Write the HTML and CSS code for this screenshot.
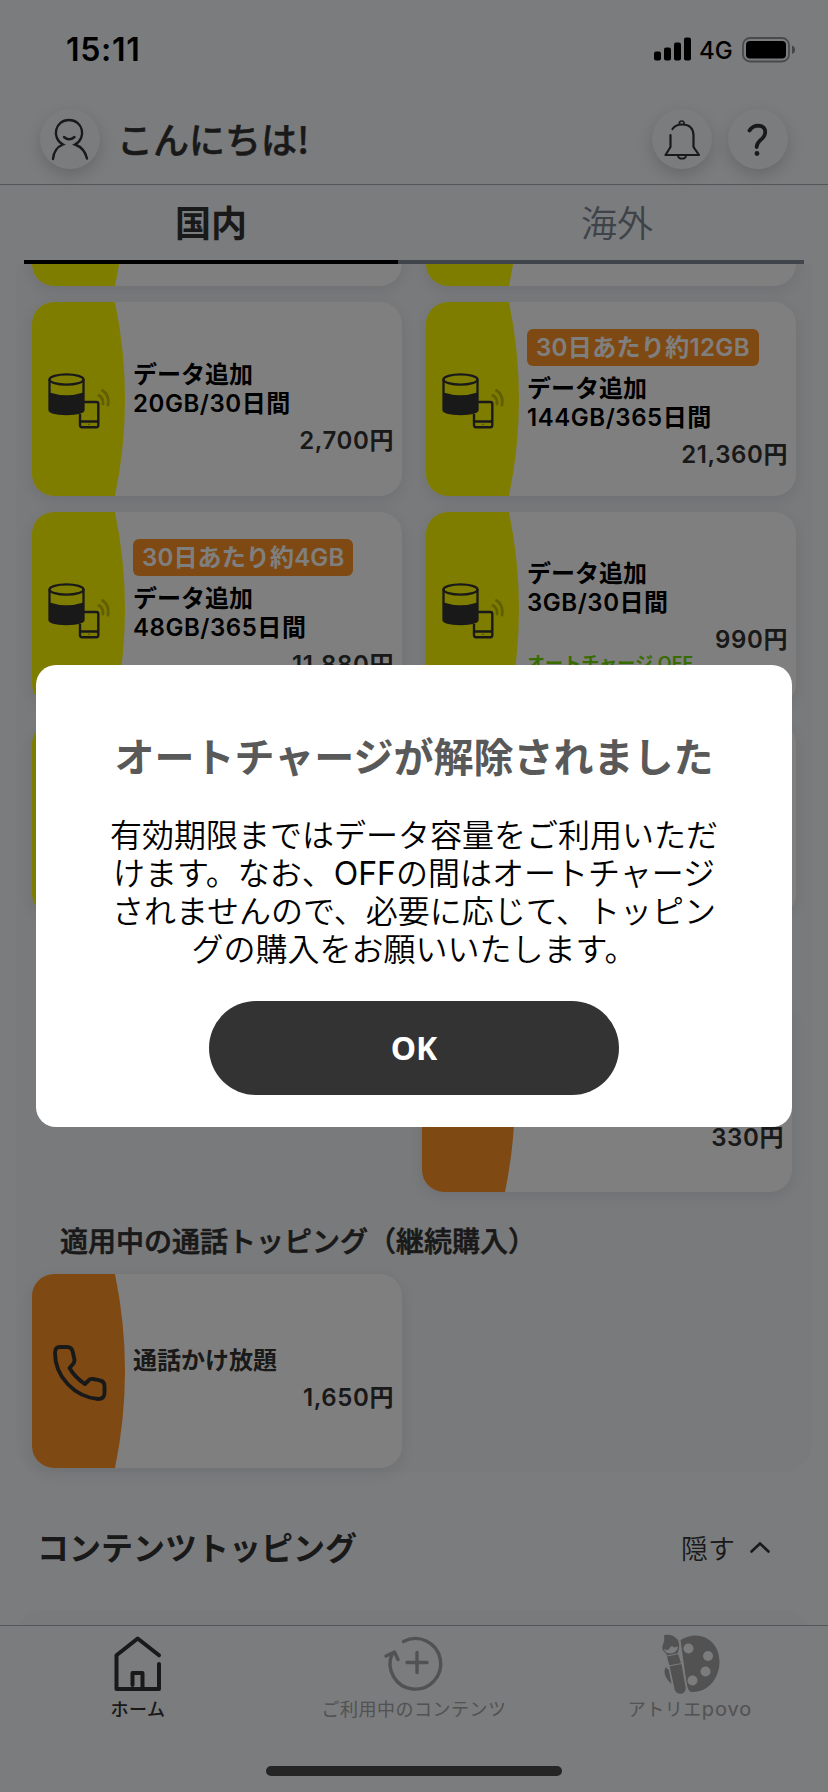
FILE: index.html
```html
<!DOCTYPE html>
<html lang="ja">
<head>
<meta charset="utf-8">
<title>povo</title>
<link rel="stylesheet" href="styles.css">
</head>
<body>
<svg class="defs" width="0" height="0">
  <symbol id="curve" viewBox="0 0 93 194"><path d="M0 0H83Q103 97 83 194H0Z" fill="currentColor"/></symbol>
  <symbol id="data" viewBox="0 0 62 56">
    <path d="M1.5 19.500Q18.500 25 35.500 19.500V37Q35 41 19 41.500Q2 41 1.500 37Z" fill="#333"/>
    <path d="M1.500 6V37C2 42.300 35 42.300 35.500 37V6" fill="none" stroke="#333" stroke-width="2.300"/>
    <ellipse cx="18.500" cy="6.500" rx="17" ry="5.200" fill="none" stroke="#333" stroke-width="2.300"/>
    <path d="M36 29H48.500Q50.300 29 50.300 31V52.300Q50.300 54.200 48.500 54.200H34Q32 54.200 32 52.300V41M32 48.500H50" fill="none" stroke="#333" stroke-width="2.400"/>
    <path d="M40 51.300h2" stroke="#a39e00" stroke-width="1"/>
    <path d="M51 22.500Q55.500 25 55 31M54.500 17.500Q61.500 22 60 32" fill="none" stroke="#c4bf00" stroke-width="2.900" stroke-linecap="round"/>
  </symbol>
</svg>
<div class="screen">
  <div class="status">
    <span class="time">15:11</span>
    <div class="status-right">
      <svg class="signal" viewBox="0 0 38 24"><rect x="0" y="14.500" width="7" height="9" rx="2"/><rect x="10" y="10.500" width="7" height="13" rx="2"/><rect x="20" y="5.500" width="7" height="18" rx="2"/><rect x="30" y=".5" width="7" height="23" rx="2"/></svg>
      <span class="net">4G</span>
      <svg class="battery" viewBox="0 0 54 26"><rect x="1" y="1" width="46" height="23.500" rx="7" fill="none" stroke="#000" stroke-opacity=".4" stroke-width="1.800"/><rect x="4" y="4" width="40" height="17.500" rx="4"/><path d="M50 8.500Q53 9.500 53 12.700T50 17Z" opacity=".45"/></svg>
    </div>
  </div>
  <header class="header">
    <span class="circle"><svg width="60" height="60" viewBox="0 0 60 60"><g fill="none" stroke="#333" stroke-width="2.400" stroke-linecap="round"><path d="M13 50Q14 39 23 35.500C11 29 15 11 29 11S47 29 35 35.500Q44.500 39 47 49.500"/><path d="M24 28Q29 32.500 34.500 28"/></g></svg></span>
    <h1 class="hello">こんにちは!</h1>
    <span class="circle bell"><svg width="60" height="60" viewBox="0 0 60 60"><g fill="none" stroke="#333" stroke-width="2.200" stroke-linecap="round" stroke-linejoin="round"><path d="M18.500 26V38L13.500 46H47L41.500 38V26Q41 15.500 30 15.500Q23.500 15.500 20.500 20"/><path d="M27.500 15V14Q27.500 12 29.700 12T32 14V15M26 47Q26.500 49.700 30 49.700T34 47" stroke-width="1.700"/></g></svg></span>
    <span class="circle help"><svg width="60" height="60" viewBox="0 0 60 60"><path d="M21.500 21.500Q24.500 16.700 30.500 16.700Q37.500 17 37.200 23.500Q37 27.500 32 31.500Q28.500 35 28.700 38" fill="none" stroke="#333" stroke-width="3.800" stroke-linecap="round"/><circle cx="29" cy="44.500" r="2.400" fill="#333"/></svg></span>
  </header>
  <nav class="tabs"><span class="tab active">国内</span><span class="tab">海外</span></nav>
  <main class="scroll">
    <section class="panel">
      <div class="cards">
        <div class="card yellow"><svg class="curve"><use href="#curve"/></svg></div>
        <div class="card yellow"><svg class="curve"><use href="#curve"/></svg></div>
        <div class="card yellow"><svg class="curve"><use href="#curve"/></svg><svg class="data"><use href="#data"/></svg>
          <div class="info"><p class="name">データ追加<br><span class="plan">20GB/30日間</span></p><p class="price">2,700円</p></div></div>
        <div class="card yellow"><svg class="curve"><use href="#curve"/></svg><svg class="data"><use href="#data"/></svg>
          <div class="info tagged"><span class="tag wide">30日あたり約12GB</span><p class="name">データ追加<br><span class="plan">144GB/365日間</span></p><p class="price">21,360円</p></div></div>
        <div class="card yellow"><svg class="curve"><use href="#curve"/></svg><svg class="data"><use href="#data"/></svg>
          <div class="info tagged"><span class="tag">30日あたり約4GB</span><p class="name">データ追加<br><span class="plan">48GB/365日間</span></p><p class="price">11,880円</p></div></div>
        <div class="card yellow"><svg class="curve"><use href="#curve"/></svg><svg class="data"><use href="#data"/></svg>
          <div class="info auto"><p class="name">データ追加<br><span class="plan">3GB/30日間</span></p><p class="price">990円</p><p class="charge">オートチャージ OFF</p></div></div>
        <div class="card yellow"><svg class="curve"><use href="#curve"/></svg></div>
        <div class="card yellow"><svg class="curve"><use href="#curve"/></svg></div>
      </div>
      <div class="cards once">
        <div class="card orange"><svg class="curve"><use href="#curve"/></svg>
          <div class="info low"><p class="price">330円</p></div></div>
      </div>
      <h2 class="subhead">適用中の通話トッピング（継続購入）</h2>
      <div class="cards">
        <div class="card orange"><svg class="curve"><use href="#curve"/></svg>
          <svg class="phone" viewBox="0 0 54 56"><path d="M7 2H14C18 2 19.500 4 20 8L21.500 15Q21.500 17 20 19L16.500 23Q22 32.500 32 39L35.500 35.500Q37 33.500 40 34L46 35.200Q51.500 36 51.500 41V48Q51.500 54 45 54C22 52 2 32 2 8Q2 2 7 2Z" fill="none" stroke="#333" stroke-width="3.900" stroke-linejoin="round"/></svg>
          <div class="info call"><p class="name">通話かけ放題</p><p class="price">1,650円</p></div></div>
      </div>
    </section>
    <div class="content-head"><h2>コンテンツトッピング</h2><span class="hide">隠す<svg width="20" height="13" viewBox="0 0 20 13"><path d="M1.500 10.500L10 2.500L18.500 10.500" fill="none" stroke="#333" stroke-width="2.600" stroke-linecap="round"/></svg></span></div>
    <section class="panel next"></section>
  </main>
  <footer class="nav">
    <div class="item on"><svg width="60" height="60" viewBox="0 0 60 60"><g fill="none" stroke="currentColor" stroke-width="4" stroke-linecap="round" stroke-linejoin="round"><path d="M51 27.300L29.700 10.500L8.500 27.300V61H51V36"/><path d="M24.500 57V45H34.500V61"/></g></svg><span>ホーム</span></div>
    <div class="item"><svg width="60" height="60" viewBox="0 0 60 60"><g fill="none" stroke="currentColor" stroke-width="3.400" stroke-linecap="round" stroke-linejoin="round"><path d="M19.500 13.500A25.300 25.300 0 1 1 8.300 25.500"/><path d="M2 28L10.500 24L14 31.500M33 24.500V44.500M23 34.500H43"/></g></svg><span>ご利用中のコンテンツ</span></div>
    <div class="item"><svg width="60" height="60" viewBox="0 0 60 60"><path d="M20.500 12Q28 7.500 35 7.500C50 7.500 59.500 19 59.500 34S49 65 31 64Q27.500 63 26 52Z" fill="currentColor"/><g class="hole"><circle cx="28.500" cy="20.500" r="5"/><circle cx="48" cy="28" r="5"/><circle cx="45.500" cy="43.500" r="5"/><circle cx="32.500" cy="52.500" r="5"/></g><path d="M5.500 39Q1.500 47 11.500 56L9 42Z" fill="currentColor"/><path class="brush" d="M3 6.500Q13 4.500 18.500 11.500Q21.500 18 18.500 25L22.500 37L26.500 60Q26 66.500 20 66.500Q15 66 14 62L9 39L5.500 26Q0 22 2 17Q4.500 12 3 6.500Z"/><path class="hole" d="M4 20.500Q8 24 10 19.500Q12 17 14 19.500L18 18.500Q17.500 24 11.500 25.300Q5 26 4 20.500Z"/><path d="M7 28L19 25.500M8.500 38L21.500 35.500" class="line"/></svg><span>アトリエ<span class="latin">povo</span></span></div>
  </footer>
  <div class="home-bar"></div>
</div>
<div class="overlay">
  <div class="modal">
    <h2>オートチャージが解除されました</h2>
    <p>有効期限まではデータ容量をご利用いただ<br>けます。なお、<span class="off">OFF</span>の間はオートチャージ<br>されませんので、必要に応じて、トッピン<br>グの購入をお願いいたします。</p>
    <button>OK</button>
  </div>
</div>
</body>
</html>
```
FILE: styles.css
```css
* { box-sizing: border-box; margin: 0; padding: 0; }
body { width: 828px; height: 1792px; overflow: hidden; background: #f6f8fb; color: #333; font-family: Inter, "Noto Sans CJK JP", sans-serif; }
.defs { display: block; position: absolute; }
.screen { height: 1792px; display: flex; flex-direction: column; }
.status { height: 94px; padding: 0 32px 0 66px; display: flex; justify-content: space-between; align-items: flex-start; color: #000; }
.time { font-size: 32px; font-weight: 600; line-height: 40px; margin-top: 30px; letter-spacing: .7px; }
.status-right { display: flex; margin-top: 37px; }
.signal { width: 38px; height: 24px; margin-right: 7px; }
.net { width: 43px; font-size: 24px; font-weight: 500; line-height: 28px; }
.battery { width: 54px; height: 26px; }
.header { height: 91px; border-bottom: 1px solid #aaadb2; padding: 0 40px; display: flex; align-items: center; }
.circle { width: 60px; height: 60px; border-radius: 50%; background: #f7f9fc; box-shadow: 0 6px 16px rgba(0,0,0,.16); }
.circle svg { display: block; }
.hello { flex: 1; padding: 0 0 3px 17px; font-size: 36px; line-height: 50px; font-weight: 500; font-family: "Noto Sans CJK JP", sans-serif; -webkit-text-stroke: .5px #333; }
.help { margin-left: 16px; }
.tabs { height: 79px; margin: 0 24px; display: flex; font-family: "Noto Sans CJK JP", sans-serif; font-size: 36px; }
.tab { flex: 1; height: 79px; line-height: 73px; padding-left: 32px; text-align: center; border-bottom: 4px solid #7e8a94; font-weight: 350; color: #7c8793; }
.tab.active { flex: 0 0 374px; padding-left: 0; border-color: #000; font-weight: 700; color: #333; }
.scroll { height: 1361px; overflow: hidden; }
.panel { margin: -172px 16px 0; padding: 0 16px 4px; border-radius: 0 0 28px 28px; background: #f3f5f8; }
.cards { display: grid; grid-template-columns: 370px 370px; gap: 16px 24px; }
.card { position: relative; height: 194px; border-radius: 22px; background: #fff; display: flex; box-shadow: 0 4px 16px rgba(40,50,70,.11); overflow: hidden; }
.curve { width: 93px; height: 194px; flex: none; }
.yellow { color: #fffa00; }
.orange { color: #ff9326; }
.data { position: absolute; left: 16px; top: 71px; width: 62px; height: 56px; }
.phone { position: absolute; left: 21px; top: 71px; width: 54px; height: 56px; }
.info { flex: 1; padding: 58px 8px 0 8px; font-size: 24px; font-weight: 600; color: #333; }
.info.tagged { padding-top: 27px; }
.info.auto { padding-top: 47px; }
.info.call { padding-top: 72px; }
.info.low { padding-top: 117px; }
.tag { display: block; width: max-content; height: 37px; line-height: 37px; padding: 0 9px; margin-bottom: 8px; border-radius: 6px; background: #ff9326; color: #fff; letter-spacing: .15px; }
.tag.wide { letter-spacing: .35px; }
.name { color: #000; line-height: 29px; }
.plan { letter-spacing: .55px; }
.call .name { color: #333; }
.price { text-align: right; line-height: 30px; margin-top: 8px; letter-spacing: .6px; }
.charge { color: #6fd800; font-size: 18px; line-height: 24px; margin-top: -3px; letter-spacing: .1px; }
.once { margin: 82px 4px 0 -4px; }
.once .card { grid-column: 2; }
.subhead { padding-left: 28px; font-size: 28px; line-height: 40px; font-weight: 500; margin: 30px 0 12px; white-space: nowrap; -webkit-text-stroke: .6px #333; }
.content-head { height: 138px; padding: 13px 58px 0 37px; display: flex; align-items: center; justify-content: space-between; }
.content-head h2 { font-size: 32px; font-weight: 700; line-height: 46px; margin-top: 2px; }
.hide { display: flex; align-items: center; gap: 15px; font-size: 27px; font-weight: 350; }
.panel.next { height: 40px; margin-top: 0; border-radius: 28px 28px 0 0; }
.nav { height: 141px; border-top: 1px solid #aaadb2; display: grid; grid-template-columns: repeat(3, 1fr); color: #a4a4a4; font-size: 18px; line-height: 26px; letter-spacing: .5px; font-weight: 400; }
.item { display: flex; flex-direction: column; align-items: center; padding-top: 2px; gap: 9px; }
.item svg { overflow: visible; }
.item.on { color: #333; font-weight: 500; }
.latin { font-size: 20px; letter-spacing: 1px; line-height: 20px; }
.hole { fill: #f6f8fb; }
.brush { fill: currentColor; stroke: #f6f8fb; stroke-width: 1.5; }
.line { stroke: #f6f8fb; stroke-width: 1; fill: none; }
.home-bar { width: 296px; height: 10px; margin: 0 auto; border-radius: 5px; background: #4a4a4a; }
.overlay { position: fixed; inset: 0; background: rgba(0,0,0,.5); display: flex; align-items: center; justify-content: center; }
.modal { width: 756px; height: 462px; border-radius: 20px; background: #fff; text-align: center; padding-top: 60px; font-family: "Noto Sans CJK JP", sans-serif; }
.modal h2 { font-size: 40px; line-height: 60px; font-weight: 700; color: #595959; }
.modal p { margin-top: 29px; font-size: 32px; line-height: 38px; color: #000; font-weight: 350; }
.off { font-family: Inter, sans-serif; font-weight: 400; line-height: 0; }
.modal button { width: 410px; height: 94px; margin-top: 35px; padding-bottom: 2px; border: 0; border-radius: 47px; background: #333; color: #fff; font: 700 32px "Noto Sans", sans-serif; }
```
